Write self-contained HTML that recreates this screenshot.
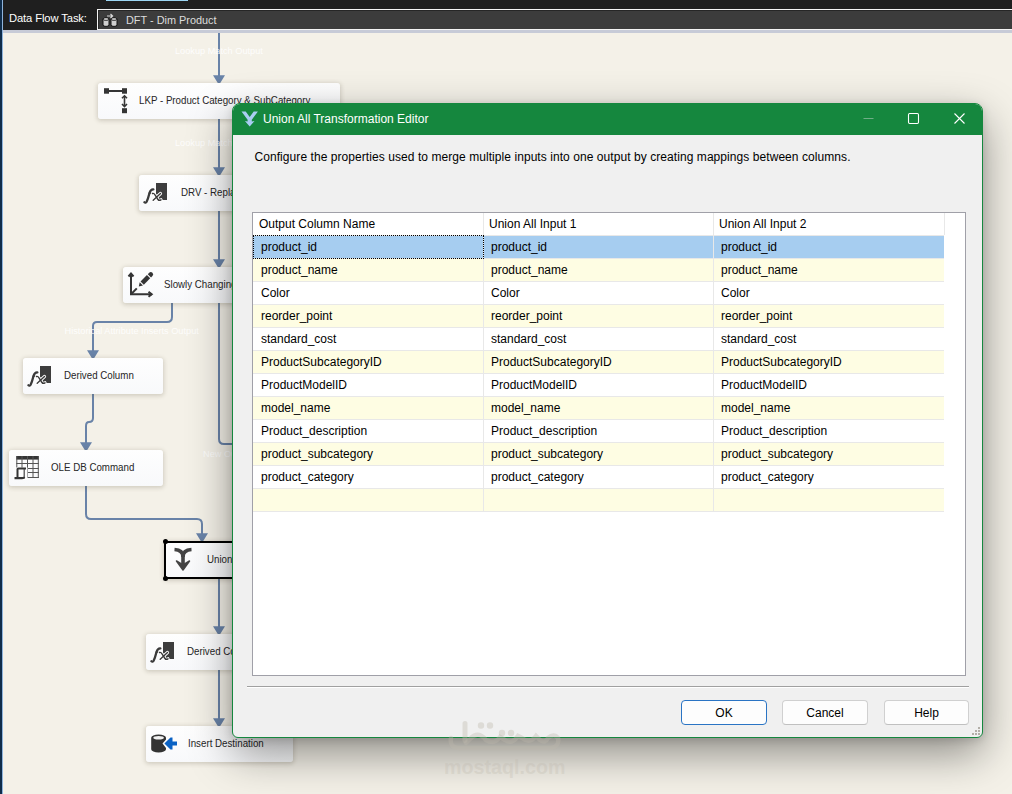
<!DOCTYPE html>
<html><head><meta charset="utf-8">
<style>
*{margin:0;padding:0;box-sizing:border-box}
html,body{width:1012px;height:794px;overflow:hidden;background:#f4f1e8;font-family:"Liberation Sans",sans-serif;position:relative}
.abs{position:absolute}
#topbar{left:0;top:0;width:1012px;height:30px;background:#1f1f1f}
#lstripe{left:0;top:0;width:2px;height:794px;background:#0f2c4a}
#lstripe2{left:2px;top:0;width:1px;height:794px;background:#8fb4dc}
#tab{left:106px;top:0;width:82px;height:1px;background:#9dd7f5}
#band{left:3px;top:30px;width:1009px;height:3px;background:#c7cbd7}
#combo{left:97px;top:9px;width:915px;height:21px;background:#3c3c3c;border:1px solid #f4f4f4;border-right:none;box-shadow:inset 1px 1px 0 #262626}
.lbl{color:#fff;font-size:11px;white-space:nowrap}
.node{position:absolute;height:36px;background:linear-gradient(#fefefe,#f8f9fb);border-radius:3px;box-shadow:0 1px 4px 1px rgba(90,80,60,.22)}
.node .t{position:absolute;top:11px;font-size:11px;color:#262626;white-space:nowrap;transform:scaleX(0.885);transform-origin:0 0}
.path{position:absolute;border-color:#6a84a9;border-style:solid;border-width:0}
.vl{position:absolute;width:2px;background:#6a84a9}
.flbl{position:absolute;color:rgba(255,255,255,.9);font-size:9.2px;white-space:nowrap}
#dlg{left:232px;top:103px;width:751px;height:635px;background:#f0f0f0;border:1px solid #15873e;border-radius:8px 8px 6px 6px;box-shadow:0 16px 44px rgba(0,0,0,.42),0 2px 10px rgba(0,0,0,.14);overflow:hidden}
#title{left:0;top:0;width:751px;height:31px;background:#15873e}
.gtxt{font-size:12px;color:#000;white-space:nowrap}
#grid{left:19px;top:108px;width:714px;height:464px;background:#fff;border:1px solid #a0a0a8}
.row{position:absolute;left:0;width:691px;height:23px;border-bottom:1px solid #e8e8e8}
.cell{position:absolute;top:0;height:22px;border-right:1px solid #e8e8e8;font-size:12px;color:#000;padding-left:7px;line-height:22px;white-space:nowrap}
.hc{padding-left:5px}
.row .cell:first-child{padding-left:8px}
.row .hc:first-child{padding-left:6px}
.focus{position:absolute;left:0;top:22px;width:231px;height:24px;border:1px dotted #000}
.btn{position:absolute;top:596px;height:25px;background:#fdfdfd;border:1px solid #d0d0d0;border-bottom-color:#c0c0c0;border-radius:4px;font-size:12px;text-align:center;line-height:25px;color:#000}
</style></head><body>
<div id="topbar" class="abs"></div>
<div id="tab" class="abs"></div>
<div id="combo" class="abs"></div>
<div class="abs lbl" style="left:9px;top:12px;font-size:11.2px;letter-spacing:-0.1px;color:#fff">Data Flow Task:</div>
<div class="abs lbl" style="left:126px;top:13.5px;font-size:10.9px;color:#dcdcdc">DFT - Dim Product</div>
<svg class="abs" style="left:100px;top:11px" width="20" height="18" viewBox="100 11 20 18">
<g stroke="#111" stroke-width="1">
<path d="M103 19 A3 1.4 0 0 1 109 19 V25 A3 1.4 0 0 1 103 25 Z" fill="#cfcfcf"/>
<path d="M111 19 A3 1.4 0 0 1 117 19 V25 A3 1.4 0 0 1 111 25 Z" fill="#cfcfcf"/>
</g>
<path d="M103.3 19.3 A2.7 1.1 0 0 0 108.7 19.3" stroke="#111" fill="none" stroke-width="0.8"/>
<path d="M111.3 19.3 A2.7 1.1 0 0 0 116.7 19.3" stroke="#111" fill="none" stroke-width="0.8"/>
<path d="M107 16 H112 M110.5 14 L112.6 16 L110.5 18" stroke="#d8d8d8" stroke-width="1.2" fill="none"/>
</svg>
<div id="band" class="abs"></div>
<div id="lstripe" class="abs"></div>
<div id="lstripe2" class="abs"></div>

<!-- flow lines -->
<svg class="abs" style="left:0;top:0" width="1012" height="794" viewBox="0 0 1012 794"><g fill="none" stroke="#6983a8" stroke-width="2"><path d="M219 33 V77" /><path d="M214.8 76.2 L223.2 76.2 L219.0 83.0 Z" fill="#6983a8"/><path d="M219 119 V169" /><path d="M214.8 168.2 L223.2 168.2 L219.0 175.0 Z" fill="#6983a8"/><path d="M219 211 V261" /><path d="M214.8 260.2 L223.2 260.2 L219.0 267.0 Z" fill="#6983a8"/><path d="M219 578 V628" /><path d="M214.8 627.2 L223.2 627.2 L219.0 634.0 Z" fill="#6983a8"/><path d="M219 670 V720" /><path d="M214.8 719.2 L223.2 719.2 L219.0 726.0 Z" fill="#6983a8"/><path d="M219 302 V439 Q219 444 224 444 H240" /><path d="M172 302 V317 Q172 322 167 322 H97 Q93 322 93 326 V352" /><path d="M88.8 351.2 L97.2 351.2 L93.0 358.0 Z" fill="#6983a8"/><path d="M93 394 V418 Q93 422 89 422 Q86 422 86 426 V444" /><path d="M81.8 443.2 L90.2 443.2 L86.0 450.0 Z" fill="#6983a8"/><path d="M86 486 V514 Q86 519 91 519 H197 Q202 519 202 524 V535" /><path d="M197.8 534.2 L206.2 534.2 L202.0 541.0 Z" fill="#6983a8"/></g></svg>
<div class="flbl" style="left:175px;top:46px">Lookup Match Output</div>
<div class="flbl" style="left:175px;top:138px">Lookup Match Output</div>
<div class="flbl" style="left:64.5px;top:326px">Historical Attribute Inserts Output</div>
<div class="flbl" style="left:203px;top:449px">New Output</div>
<!-- nodes -->
<div class="node" style="left:98px;top:83px;width:242px"><div class="t" style="left:41px">LKP - Product Category &amp; SubCategory</div></div>
<div class="node" style="left:139px;top:175px;width:200px"><div class="t" style="left:42px">DRV - Replace Nulls</div></div>
<div class="node" style="left:123px;top:267px;width:200px"><div class="t" style="left:41px">Slowly Changing Dimension</div></div>
<div class="node" style="left:23px;top:358px;width:140px"><div class="t" style="left:41px">Derived Column</div></div>
<div class="node" style="left:9px;top:450px;width:154px"><div class="t" style="left:42px">OLE DB Command</div></div>
<div class="node" style="left:164px;top:541px;width:140px;height:38px;border:2px solid #000;border-radius:3px"><div class="t" style="left:41px;top:10px">Union All</div></div>
<div class="abs" style="left:162.5px;top:539px;width:5px;height:5px;border-radius:50%;background:#000"></div>
<div class="abs" style="left:162.5px;top:576px;width:5px;height:5px;border-radius:50%;background:#000"></div>
<div class="node" style="left:146px;top:634px;width:150px"><div class="t" style="left:41px">Derived Column 1</div></div>
<div class="node" style="left:146px;top:726px;width:147px"><div class="t" style="left:42px">Insert Destination</div></div>

<!-- icons -->
<svg class="abs" style="left:0;top:0" width="1012" height="794" viewBox="0 0 1012 794"><g fill="#353535"><rect x="104" y="88.2" width="5" height="5.5"/><rect x="122" y="88.2" width="5" height="5.5"/><rect x="108" y="90" width="15" height="2"/><rect x="122" y="108.2" width="5" height="5"/></g><g fill="none" stroke="#353535" stroke-width="1.6"><path d="M124.5 96 V106"/><path d="M122 98.3 L124.5 95.8 L127 98.3"/><path d="M122 104 L124.5 106.5 L127 104"/></g><g transform="translate(156 183)"><rect x="0" y="0" width="11" height="17" fill="#3d3d3d"/><path d="M-11.6 19.2 Q-10.5 20.3 -9.3 18.6 Q-8 16 -6.5 10 Q-5.3 6 -2.6 6.3" fill="none" stroke="#3a3a3a" stroke-width="2.3" stroke-linecap="round"/><path d="M-7.6 10.2 H-3.8" stroke="#3a3a3a" stroke-width="1.1"/><g stroke="#fff" stroke-width="3.2" stroke-linecap="round"><path d="M-3.5 10.5 Q-2 10 -1 12 L2 16.5 Q3 18 5 16.8"/><path d="M4.5 10.5 L-2.8 17.2"/></g><g stroke="#3a3a3a" stroke-width="1.4" fill="none" stroke-linecap="round"><path d="M-3.5 10.5 Q-2 10 -1 12 L2 16.5 Q3 18 5 16.8"/><path d="M4.5 10.5 L-2.8 17.2"/></g></g><g transform="translate(40 366)"><rect x="0" y="0" width="11" height="17" fill="#3d3d3d"/><path d="M-11.6 19.2 Q-10.5 20.3 -9.3 18.6 Q-8 16 -6.5 10 Q-5.3 6 -2.6 6.3" fill="none" stroke="#3a3a3a" stroke-width="2.3" stroke-linecap="round"/><path d="M-7.6 10.2 H-3.8" stroke="#3a3a3a" stroke-width="1.1"/><g stroke="#fff" stroke-width="3.2" stroke-linecap="round"><path d="M-3.5 10.5 Q-2 10 -1 12 L2 16.5 Q3 18 5 16.8"/><path d="M4.5 10.5 L-2.8 17.2"/></g><g stroke="#3a3a3a" stroke-width="1.4" fill="none" stroke-linecap="round"><path d="M-3.5 10.5 Q-2 10 -1 12 L2 16.5 Q3 18 5 16.8"/><path d="M4.5 10.5 L-2.8 17.2"/></g></g><g transform="translate(163 642)"><rect x="0" y="0" width="11" height="17" fill="#3d3d3d"/><path d="M-11.6 19.2 Q-10.5 20.3 -9.3 18.6 Q-8 16 -6.5 10 Q-5.3 6 -2.6 6.3" fill="none" stroke="#3a3a3a" stroke-width="2.3" stroke-linecap="round"/><path d="M-7.6 10.2 H-3.8" stroke="#3a3a3a" stroke-width="1.1"/><g stroke="#fff" stroke-width="3.2" stroke-linecap="round"><path d="M-3.5 10.5 Q-2 10 -1 12 L2 16.5 Q3 18 5 16.8"/><path d="M4.5 10.5 L-2.8 17.2"/></g><g stroke="#3a3a3a" stroke-width="1.4" fill="none" stroke-linecap="round"><path d="M-3.5 10.5 Q-2 10 -1 12 L2 16.5 Q3 18 5 16.8"/><path d="M4.5 10.5 L-2.8 17.2"/></g></g><g fill="none" stroke="#353535" stroke-width="2"><path d="M131 273 V294.2 H152"/><path d="M128.5 276.5 L131 273.5 L133.5 276.5"/><path d="M148.5 291.7 L151.7 294.2 L148.5 296.7"/><path d="M131.5 293.7 L136.8 288.4"/></g><g fill="#353535" transform="translate(138.8 286.4) rotate(-45)"><path d="M0 0 L3.6 -2.3 L3.6 2.3 Z"/><rect x="4.8" y="-2.3" width="9" height="4.6"/><path d="M15 -2.3 H17 A2.3 2.3 0 0 1 17 2.3 H15 Z"/></g><g><rect x="16.3" y="456" width="22.5" height="3.6" fill="#353535"/><path d="M16.3 463.5 H38.8" stroke="#555" stroke-width="1"/><path d="M16.3 468.5 H38.8" stroke="#555" stroke-width="1"/><path d="M16.3 472.5 H38.8" stroke="#555" stroke-width="1"/><path d="M16.3 477.5 H38.8" stroke="#555" stroke-width="1"/><path d="M16.8 456 V478" stroke="#555" stroke-width="1"/><path d="M22 456 V478" stroke="#555" stroke-width="1"/><path d="M27.5 456 V478" stroke="#555" stroke-width="1"/><path d="M33 456 V478" stroke="#555" stroke-width="1"/><path d="M38.3 456 V478" stroke="#555" stroke-width="1"/><rect x="13" y="467.5" width="14.5" height="12.5" fill="#fdfdfd"/><path d="M17.5 478 V469 Q17.5 468.5 18.5 468.5 H26" fill="none" stroke="#353535" stroke-width="2"/><path d="M24.2 469 V478.5" fill="none" stroke="#444" stroke-width="1.2"/><path d="M14.5 478.2 H22 Q24 478.2 24.2 477" fill="none" stroke="#353535" stroke-width="2.2"/></g><g fill="none" stroke="#444" stroke-width="3.6" stroke-linejoin="miter"><path d="M174.5 549.5 Q183 550 183 557 Q183 550 191.5 549.5"/><path d="M183 556 V566"/></g><path d="M176.5 561 L183 570 L189.5 561 L183 565 Z" fill="#444" stroke="#444" stroke-width="1.5" stroke-linejoin="round"/><path d="M151.2 737.8 A7.4 3.4 0 0 1 166 737.8 L166 739.5 L162.5 743.6 L166 748 V749.2 A7.4 3.4 0 0 1 151.2 749.2 Z" fill="#333"/><ellipse cx="158.6" cy="737.8" rx="5.3" ry="1.8" fill="#f2f2f2"/><path d="M164.4 743.6 L170.5 737.6 H172.5 V741.6 H177 V745.6 H172.5 V749.6 H170.5 Z" fill="#0b62c4"/></svg>
<!-- dialog -->
<div id="dlg" class="abs">
  <div id="title" class="abs"></div>
  <svg class="abs" style="left:0;top:0" width="751" height="31" viewBox="232 103 751 31">
    <path d="M240.5 110.5 L244.7 110.5 L248.7 116 L252.7 110.5 L256.9 110.5 L250.8 118.7 V120.5 L253.5 120 L248.7 125.5 L243.9 120 L246.6 120.5 V118.7 Z" fill="#a9cdf2"/>
    <path d="M862.5 117.5 H872.5" stroke="#6fae87" stroke-width="1"/>
    <rect x="907.5" y="112.5" width="10" height="10" rx="1.2" fill="none" stroke="#fff" stroke-width="1.1"/>
    <path d="M953.5 112.5 L963.5 122.5 M963.5 112.5 L953.5 122.5" stroke="#fff" stroke-width="1.1"/>
  </svg>
  <div class="abs gtxt" style="left:30px;top:8px;color:#fff">Union All Transformation Editor</div>
  <div class="abs gtxt" style="left:21.5px;top:46px;letter-spacing:0.065px">Configure the properties used to merge multiple inputs into one output by creating mappings between columns.</div>
  <div id="grid" class="abs">
<div class="row hdrow" style="top:0;background:#fff"><div class="cell hc" style="left:0;width:231px">Output Column Name</div><div class="cell hc" style="left:231px;width:230px">Union All Input 1</div><div class="cell hc" style="left:461px;width:231px">Union All Input 2</div></div>
<div class="row" style="top:23px;background:#a6cdf0"><div class="cell" style="left:0;width:231px">product_id</div><div class="cell" style="left:231px;width:230px">product_id</div><div class="cell" style="left:461px;width:230px;border-right:none">product_id</div></div>
<div class="row" style="top:46px;background:#fefde3"><div class="cell" style="left:0;width:231px">product_name</div><div class="cell" style="left:231px;width:230px">product_name</div><div class="cell" style="left:461px;width:230px;border-right:none">product_name</div></div>
<div class="row" style="top:69px;background:#ffffff"><div class="cell" style="left:0;width:231px">Color</div><div class="cell" style="left:231px;width:230px">Color</div><div class="cell" style="left:461px;width:230px;border-right:none">Color</div></div>
<div class="row" style="top:92px;background:#fefde3"><div class="cell" style="left:0;width:231px">reorder_point</div><div class="cell" style="left:231px;width:230px">reorder_point</div><div class="cell" style="left:461px;width:230px;border-right:none">reorder_point</div></div>
<div class="row" style="top:115px;background:#ffffff"><div class="cell" style="left:0;width:231px">standard_cost</div><div class="cell" style="left:231px;width:230px">standard_cost</div><div class="cell" style="left:461px;width:230px;border-right:none">standard_cost</div></div>
<div class="row" style="top:138px;background:#fefde3"><div class="cell" style="left:0;width:231px">ProductSubcategoryID</div><div class="cell" style="left:231px;width:230px">ProductSubcategoryID</div><div class="cell" style="left:461px;width:230px;border-right:none">ProductSubcategoryID</div></div>
<div class="row" style="top:161px;background:#ffffff"><div class="cell" style="left:0;width:231px">ProductModelID</div><div class="cell" style="left:231px;width:230px">ProductModelID</div><div class="cell" style="left:461px;width:230px;border-right:none">ProductModelID</div></div>
<div class="row" style="top:184px;background:#fefde3"><div class="cell" style="left:0;width:231px">model_name</div><div class="cell" style="left:231px;width:230px">model_name</div><div class="cell" style="left:461px;width:230px;border-right:none">model_name</div></div>
<div class="row" style="top:207px;background:#ffffff"><div class="cell" style="left:0;width:231px">Product_description</div><div class="cell" style="left:231px;width:230px">Product_description</div><div class="cell" style="left:461px;width:230px;border-right:none">Product_description</div></div>
<div class="row" style="top:230px;background:#fefde3"><div class="cell" style="left:0;width:231px">product_subcategory</div><div class="cell" style="left:231px;width:230px">product_subcategory</div><div class="cell" style="left:461px;width:230px;border-right:none">product_subcategory</div></div>
<div class="row" style="top:253px;background:#ffffff"><div class="cell" style="left:0;width:231px">product_category</div><div class="cell" style="left:231px;width:230px">product_category</div><div class="cell" style="left:461px;width:230px;border-right:none">product_category</div></div>
<div class="row" style="top:276px;background:#fefde3"><div class="cell" style="left:0;width:231px"></div><div class="cell" style="left:231px;width:230px"></div><div class="cell" style="left:461px;width:230px;border-right:none"></div></div>
<div class="focus"></div>
  </div>
  <div class="abs" style="left:14px;top:582px;width:722px;height:1px;background:#a0a0a0"></div>
  <div class="abs" style="left:14px;top:583px;width:722px;height:1px;background:#fff"></div>
  <div class="abs" style="left:745px;top:623px;width:2px;height:2px;background:#b3afa8"></div><div class="abs" style="left:742px;top:626px;width:2px;height:2px;background:#b3afa8"></div><div class="abs" style="left:745px;top:626px;width:2px;height:2px;background:#b3afa8"></div><div class="abs" style="left:739px;top:629px;width:2px;height:2px;background:#b3afa8"></div><div class="abs" style="left:742px;top:629px;width:2px;height:2px;background:#b3afa8"></div><div class="abs" style="left:745px;top:629px;width:2px;height:2px;background:#b3afa8"></div>
  <div class="btn" style="left:448px;width:86px;border-color:#2a74c4">OK</div>
  <div class="btn" style="left:549px;width:86px">Cancel</div>
  <div class="btn" style="left:651px;width:85px">Help</div>
</div>
<svg class="abs" style="left:430px;top:715px" width="150" height="70" viewBox="430 715 150 70">
<g fill="rgba(190,184,172,0.38)">
<rect x="462.5" y="721" width="5" height="22" rx="2.5"/>
<circle cx="481" cy="725.5" r="3.2"/><circle cx="490" cy="725.5" r="3.2"/>
<circle cx="502" cy="733" r="3.2"/><circle cx="511" cy="733" r="3.2"/>
</g>
<path d="M451 738 Q449 748 460 748 H548 Q560 748 558 738 Q554 733 548 738 Q545 744 540 740 L536 736 Q530 744 522 738 L518 736 Q512 745 505 740 L500 737 Q494 745 486 740 Q478 730 470 739 L466 743" fill="none" stroke="rgba(190,184,172,0.35)" stroke-width="4.5" stroke-linecap="round"/>
<text x="444" y="773.5" font-family="Liberation Sans" font-weight="bold" font-size="19.7" fill="rgba(190,184,172,0.30)">mostaql.com</text>
</svg>
</body></html>
